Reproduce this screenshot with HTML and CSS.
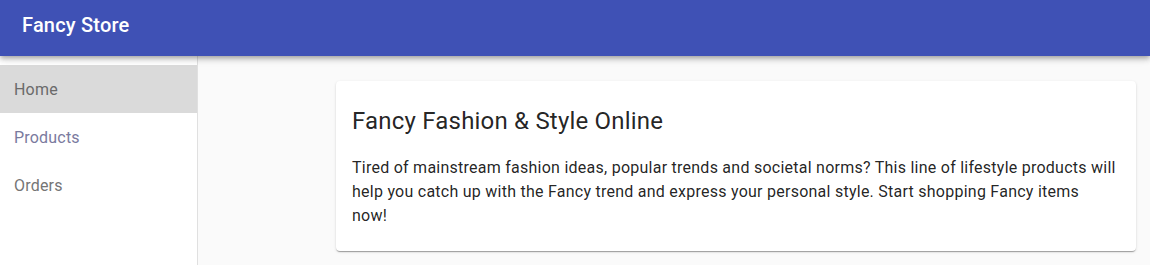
FILE: index.html
```html
<!DOCTYPE html>
<html lang="en">
<head>
    <meta charset="UTF-8">
    <meta name="viewport" content="width=device-width, initial-scale=1.0">
    <title>Fancy Store</title>
    <link rel="stylesheet" href="styles.css">
</head>
<body>
    <header class="toolbar">
        <span class="toolbar-title">Fancy Store</span>
    </header>
    <div class="layout">
        <nav class="sidenav">
            <a class="nav-item active" href="#">Home</a>
            <a class="nav-item visited" href="#">Products</a>
            <a class="nav-item" href="#">Orders</a>
        </nav>
        <main class="content">
            <div class="card">
                <h2 class="card-title">Fancy Fashion &amp; Style Online</h2>
                <p class="card-text">Tired of mainstream fashion ideas, popular trends and societal norms? This line of lifestyle products will help you catch up with the Fancy trend and express your personal style. Start shopping Fancy items now!</p>
            </div>
        </main>
    </div>
</body>
</html>
```

FILE: styles.css
```css
html, body {
    margin: 0;
    height: 100%;
}

body {
    font-family: Roboto, "Liberation Sans", sans-serif;
    letter-spacing: 0.2px;
    background-color: #fafafa;
    color: rgba(0, 0, 0, 0.87);
    display: flex;
    flex-direction: column;
}

.toolbar {
    height: 56px;
    flex: none;
    background-color: #3f51b5;
    color: white;
    display: flex;
    align-items: center;
    padding: 0 22px;
    position: relative;
    z-index: 2;
    box-shadow: 0 2px 4px -1px rgba(0, 0, 0, 0.2), 0 4px 5px 0 rgba(0, 0, 0, 0.14), 0 1px 10px 0 rgba(0, 0, 0, 0.12);
}

.toolbar-title {
    font-size: 20px;
    font-weight: 500;
    margin-top: -6px;
}

.layout {
    flex: 1;
    display: flex;
}

.sidenav {
    width: 197px;
    flex: none;
    background-color: white;
    border-right: 1px solid #e0e0e0;
    padding-top: 9px;
    display: flex;
    flex-direction: column;
}

.nav-item {
    height: 48px;
    display: flex;
    align-items: center;
    padding: 0 14px;
    font-size: 16px;
    color: #757575;
    text-decoration: none;
}

.nav-item.active {
    background-color: #dadada;
    color: #6a6a6a;
}

.nav-item.visited {
    color: #7a7a9e;
}

.content {
    flex: 1;
    padding: 25px 14px 0 138px;
}

.card {
    width: 766px;
    background-color: white;
    border-radius: 4px;
    padding: 16px 18px 23px 16px;
    box-shadow: 0 2px 1px -1px rgba(0, 0, 0, 0.2), 0 1px 1px 0 rgba(0, 0, 0, 0.14), 0 1px 3px 0 rgba(0, 0, 0, 0.12);
}

.card-title {
    font-size: 24px;
    font-weight: 400;
    line-height: 32px;
    margin: 8px 0 19px;
}

.card-text {
    font-size: 16px;
    line-height: 24px;
    letter-spacing: 0.25px;
    margin: 0;
}
```
